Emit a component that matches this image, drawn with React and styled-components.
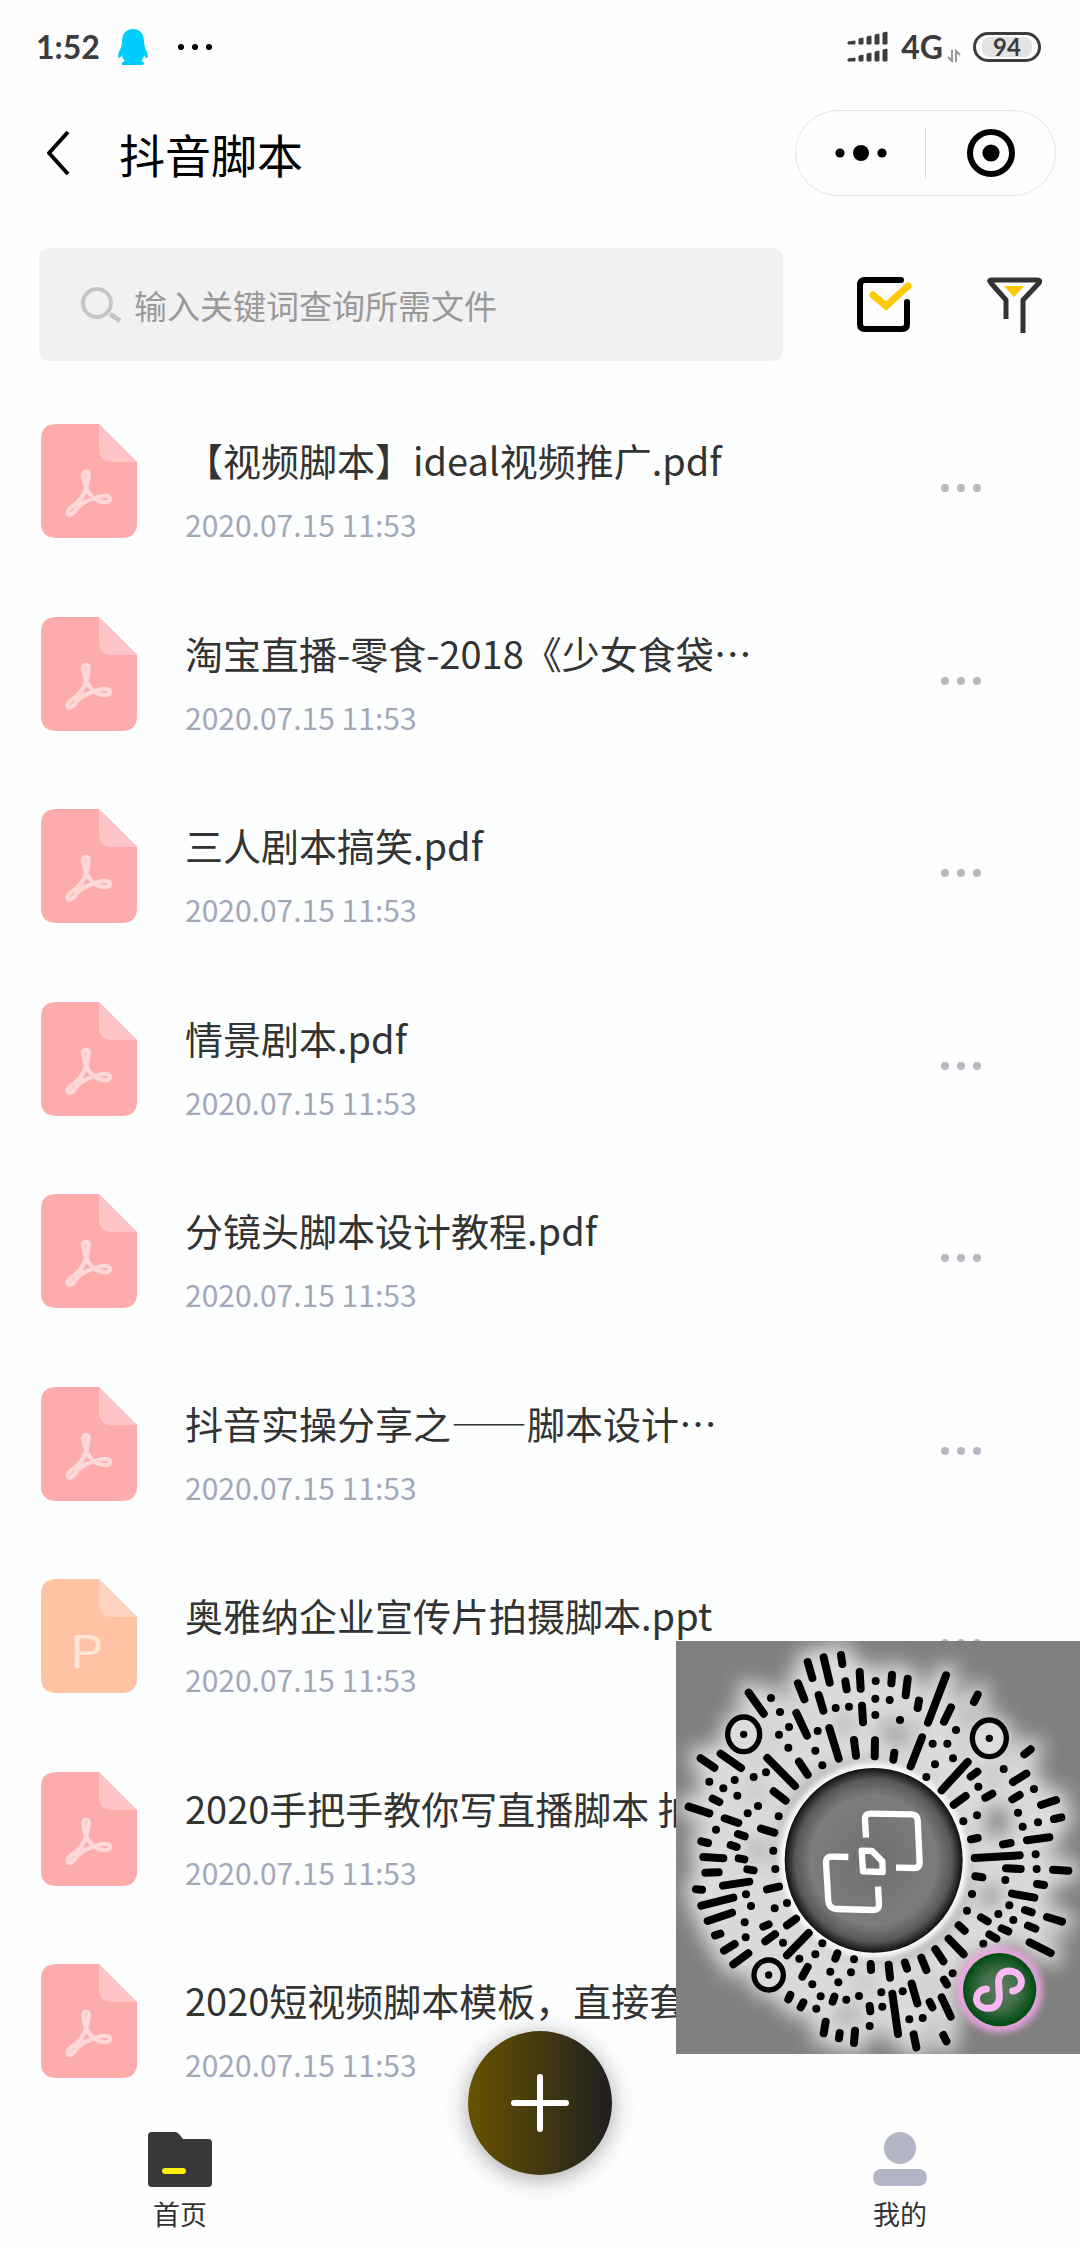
import React from 'react'
import { useState } from 'react'
import styled, { createGlobalStyle } from 'styled-components'

const files = [
  { id: 1, type: 'pdf', name: '【视频脚本】ideal视频推广.pdf' },
  { id: 2, type: 'pdf', name: '淘宝直播-零食-2018《少女食袋…' },
  { id: 3, type: 'pdf', name: '三人剧本搞笑.pdf' },
  { id: 4, type: 'pdf', name: '情景剧本.pdf' },
  { id: 5, type: 'pdf', name: '分镜头脚本设计教程.pdf' },
  { id: 6, type: 'pdf', name: '抖音实操分享之⸺脚本设计…' },
  { id: 7, type: 'ppt', name: '奥雅纳企业宣传片拍摄脚本.ppt' },
  { id: 8, type: 'pdf', name: '2020手把手教你写直播脚本 拍…' },
  { id: 9, type: 'pdf', name: '2020短视频脚本模板，直接套…' },
]

// strokes of the mini program code: x1, y1, x2, y2
const codeBars = [
  [443, 126, 457, 174], [491, 112, 509, 188], [543, 105, 547, 132], [414, 190, 433, 238],
  [476, 225, 490, 272], [556, 184, 560, 208], [599, 156, 602, 206], [696, 164, 694, 190],
  [743, 176, 737, 226], [777, 242, 773, 264], [858, 166, 804, 308], [873, 262, 852, 305],
  [953, 224, 942, 246], [266, 218, 311, 281], [409, 279, 441, 347], [606, 257, 609, 307],
  [508, 324, 536, 416], [582, 360, 588, 407], [645, 361, 644, 409], [703, 398, 700, 419],
  [786, 352, 752, 439], [417, 425, 443, 464], [322, 414, 405, 498], [341, 514, 377, 542],
  [923, 426, 845, 511], [952, 455, 932, 470], [1112, 388, 1093, 403], [1099, 461, 1059, 486],
  [997, 521, 976, 533], [917, 528, 881, 554], [1079, 525, 1057, 538], [1188, 540, 1143, 555],
  [1204, 592, 1182, 597], [1168, 652, 1101, 661], [953, 654, 933, 658], [1052, 669, 1029, 673],
  [1079, 706, 944, 714], [1038, 745, 1082, 747], [1179, 749, 1225, 752], [946, 769, 967, 772],
  [1131, 792, 1152, 795], [1056, 821, 1123, 833], [1095, 870, 1115, 877], [1161, 891, 1206, 905],
  [963, 892, 983, 904], [1104, 917, 1126, 926], [1025, 925, 1045, 934], [1109, 967, 1172, 999],
  [988, 943, 1009, 956], [896, 916, 914, 932], [866, 956, 911, 1003], [826, 988, 850, 1024],
  [784, 1013, 799, 1050], [735, 1028, 741, 1046], [686, 1034, 690, 1073], [632, 1032, 633, 1050],
  [532, 1000, 526, 1016], [443, 1041, 427, 1070], [852, 1079, 861, 1094], [523, 1130, 518, 1145],
  [391, 1125, 385, 1138], [430, 1147, 422, 1162], [629, 1158, 631, 1174], [755, 1091, 772, 1150],
  [697, 1121, 714, 1242], [809, 1146, 817, 1162], [845, 1132, 872, 1190], [497, 1205, 491, 1240],
  [539, 1239, 537, 1255], [585, 1232, 582, 1269], [761, 1243, 769, 1282], [850, 1245, 859, 1264],
  [122, 415, 163, 443], [182, 401, 243, 444], [158, 536, 178, 546], [86, 560, 148, 580],
  [194, 595, 235, 609], [234, 642, 254, 649], [303, 626, 343, 638], [124, 664, 144, 669],
  [212, 675, 230, 681], [130, 711, 190, 715], [236, 715, 253, 718], [262, 748, 281, 751],
  [136, 758, 176, 757], [189, 797, 268, 785], [108, 808, 126, 809], [124, 857, 220, 833],
  [143, 903, 216, 878], [321, 808, 357, 800], [381, 916, 408, 896], [310, 920, 326, 913],
  [316, 964, 345, 943], [165, 946, 181, 941], [192, 992, 224, 972], [220, 1033, 265, 1000],
  [381, 1006, 446, 939],
]

const codeDots = [
  [647, 183], [333, 234], [360, 276], [387, 321], [357, 344], [385, 383], [527, 264], [567, 260],
  [646, 236], [689, 240], [646, 285], [720, 300], [888, 330], [818, 371], [862, 371], [879, 415],
  [825, 433], [799, 471], [473, 333], [466, 392], [487, 436], [1031, 447], [955, 500], [1122, 507],
  [951, 586], [910, 604], [1074, 578], [1088, 620], [1134, 607], [1127, 703], [1130, 747], [1036, 780],
  [936, 822], [1048, 856], [1015, 882], [1060, 900], [921, 872], [970, 971], [487, 970], [466, 1003],
  [418, 1016], [582, 1018], [511, 1055], [573, 1057], [535, 1087], [457, 1093], [482, 1129], [559, 1139],
  [597, 1128], [469, 1166], [664, 1117], [728, 1114], [667, 1160], [629, 1218], [748, 1198], [788, 1194],
  [878, 1060], [148, 485], [190, 505], [224, 480], [281, 471], [318, 457], [232, 527], [294, 558],
  [263, 580], [356, 589], [168, 629], [340, 692], [346, 747], [258, 823], [273, 858], [344, 865],
  [381, 849], [254, 907], [257, 952], [369, 968],
]

const codeEyes = [
  { cx: 251, cy: 343, rx: 48, ry: 52 },
  { cx: 988, cy: 355, rx: 51, ry: 55 },
  { cx: 326, cy: 1065, rx: 44, ry: 45 },
]

const PenguinIcon = () => (
  <svg width="30" height="36" viewBox="0 0 30 36" fill="#00ccfe">
    <path d="M15 0C8 0 4 5 4 12C4 16 3 19 1 23C0 26 0 29 1 29C2 29 3 28 4 26C4 28 5 30 7 32C4 33 3 34 4 36H25C27 34 26 33 23 32C25 30 26 28 26 26C27 28 28 29 29 29C30 29 30 26 29 23C27 19 26 16 26 12C26 5 22 0 15 0Z" />
  </svg>
)

const SignalIcon = () => (
  <svg width="42" height="32" viewBox="0 0 42 32" fill="#3c3c3c" stroke="#3c3c3c" strokeLinejoin="round">
    {[0, 17].map(y => (
      <g key={y} transform={`translate(0 ${y})`}>
        <path d="M1 11L8 10V13H1Z" />
        <path d="M12 8L16 7V13H12Z" />
        <path d="M20 6L24 5V13H20Z" />
        <path d="M28 4L32 3V13H28Z" />
        <path d="M36 2L40 1V13H36Z" />
      </g>
    ))}
  </svg>
)

const DataArrows = () => (
  <svg width="14" height="14" viewBox="0 0 14 14" fill="none" stroke="#999" strokeWidth="2">
    <path d="M5 1V12L1 8M9 13V2L13 6" />
  </svg>
)

const BackIcon = () => (
  <svg width="24" height="46" viewBox="0 0 24 46" fill="none" stroke="#000" strokeWidth="4" strokeLinejoin="round">
    <path d="M22 2L3 23L22 44" />
  </svg>
)

const MenuIcon = () => (
  <svg width="52" height="18" viewBox="0 0 52 18">
    <circle cx="5" cy="9" r="4.6" />
    <circle cx="26" cy="9" r="8" />
    <circle cx="47" cy="9" r="4.6" />
  </svg>
)

const TargetIcon = () => (
  <svg width="50" height="50" viewBox="0 0 50 50">
    <circle cx="25" cy="25" r="21" fill="none" stroke="#000" strokeWidth="6" />
    <circle cx="25" cy="25" r="8.6" />
  </svg>
)

const SearchIcon = () => (
  <svg width="42" height="38" viewBox="0 0 42 38" fill="none" stroke="#c6c6c6" strokeWidth="4">
    <circle cx="17" cy="17" r="14" />
    <path d="M30 28L40 35" strokeWidth="5" />
  </svg>
)

const SelectIcon = () => (
  <svg width="56" height="56" viewBox="0 0 56 56" fill="none" strokeLinecap="round" strokeLinejoin="round">
    <path d="M44 3H8Q3 3 3 8V47Q3 52 8 52H45Q50 52 50 47V25" stroke="#000" strokeWidth="6" />
    <path d="M16 18L29 29L51 9" stroke="#ffcb00" strokeWidth="7" strokeLinejoin="miter" />
  </svg>
)

const FilterIcon = () => (
  <svg width="56" height="56" viewBox="0 0 56 56" fill="none" stroke="#333" strokeWidth="5" strokeLinejoin="round">
    <path d="M19 42V23L4 6Q1 3 5 3H50Q54 3 52 6L36 23V56" />
    <path d="M17 9H37L27 20Z" fill="#ffcb00" stroke="none" />
  </svg>
)

const FileIcon = ({ type }) => {
  const ppt = type === 'ppt'
  return (
    <svg width="97" height="115" viewBox="0 0 97 115">
      <path d="M16 0H58L96 38V99Q96 114 81 114H16Q0 114 0 99V15Q0 0 16 0Z" fill={ppt ? '#fec2a4' : '#fdabab'} />
      <path d="M58 0L96 38H71Q58 38 58 25Z" fill={ppt ? '#fed3bf' : '#fec4c8'} />
      {ppt ? (
        <text x="46" y="89" textAnchor="middle" fontFamily="Liberation Sans, sans-serif" fontSize="48" fill="#ffe9d6">P</text>
      ) : (
        <path
          d="M45 48C41 48 42 54 44 60C46 68 50 73 56 76C62 79 69 79 69 75C69 71 62 71 54 74C45 77 40 79 36 84C33 89 29 92 27 90C25 87 30 83 36 79C42 74 46 64 47 56C48 51 48 48 45 48Z"
          fill="none"
          stroke="#fed7d7"
          strokeWidth="4.4"
          strokeLinejoin="round"
        />
      )}
    </svg>
  )
}

const MoreIcon = () => (
  <svg width="42" height="10" viewBox="0 0 42 10" fill="#b7b8c1">
    <circle cx="5" cy="5" r="4" />
    <circle cx="21" cy="5" r="4" />
    <circle cx="37" cy="5" r="4" />
  </svg>
)

const FolderIcon = () => (
  <svg width="64" height="56" viewBox="0 0 64 56">
    <path d="M4 0H27Q29 0 31 2L35 7H60Q64 7 64 11V51Q64 55 60 55H4Q0 55 0 51V4Q0 0 4 0Z" fill="#383838" />
    <rect x="14" y="36" width="24" height="6" rx="3" fill="#fff100" />
  </svg>
)

const UserIcon = () => (
  <svg width="56" height="56" viewBox="0 0 56 56" fill="#b1b5c5">
    <circle cx="28" cy="16" r="16" />
    <rect x="1" y="37" width="54" height="17" rx="8" />
  </svg>
)

const PlusIcon = () => (
  <svg width="58" height="58" viewBox="0 0 58 58" stroke="#fff" strokeWidth="6" strokeLinecap="round">
    <path d="M29 3V55M3 29H55" />
  </svg>
)

const MiniCode = () => (
  <svg width="404" height="413" viewBox="48 63 1212 1239" role="img" aria-label="小程序码">
    <defs>
      <filter id="halo" x="-20%" y="-20%" width="140%" height="140%">
        <feGaussianBlur stdDeviation="28" />
      </filter>
      <filter id="soft" x="-30%" y="-30%" width="160%" height="160%">
        <feGaussianBlur stdDeviation="9" />
      </filter>
      <radialGradient id="disc">
        <stop offset="0" stopColor="#707070" />
        <stop offset="0.7" stopColor="#7c7c7c" />
        <stop offset="0.88" stopColor="#585858" />
        <stop offset="1" stopColor="#101010" />
      </radialGradient>
      <radialGradient id="green">
        <stop offset="0" stopColor="#5f7a63" />
        <stop offset="0.5" stopColor="#44704a" />
        <stop offset="1" stopColor="#004a12" />
      </radialGradient>
      <g id="marks" strokeLinecap="round">
        {codeBars.map(([x1, y1, x2, y2]) => (
          <line key={`${x1}-${y1}`} x1={x1} y1={y1} x2={x2} y2={y2} />
        ))}
        {codeDots.map(([x, y]) => (
          <line key={`${x}-${y}`} x1={x} y1={y} x2={x} y2={y} />
        ))}
      </g>
    </defs>
    <rect x="48" y="63" width="1212" height="1239" fill="#808080" />
    <g filter="url(#halo)" opacity="0.72">
      <use href="#marks" stroke="#fff" strokeWidth="72" />
      {codeEyes.map(eye => (
        <ellipse key={eye.cx} {...eye} fill="#fff" stroke="#fff" strokeWidth="44" />
      ))}
    </g>
    <ellipse cx="641" cy="721" rx="284" ry="294" fill="#fff" filter="url(#soft)" />
    <use href="#marks" stroke="#000" strokeWidth="24" />
    {codeEyes.map(eye => (
      <g key={eye.cx}>
        <ellipse {...eye} fill="#dcdcdc" stroke="#000" strokeWidth="16" />
        <circle cx={eye.cx} cy={eye.cy} r="11" />
      </g>
    ))}
    <ellipse cx="641" cy="721" rx="267" ry="277" fill="url(#disc)" />
    <g fill="none" stroke="#fff" strokeWidth="19" strokeLinejoin="round">
      <path d="M618 653L615 600Q613 581 632 581L755 583Q772 584 773 600L779 728Q779 744 763 744L708 743" />
      <path d="M565 711L515 710Q497 710 498 728L505 845Q508 866 530 867L640 870Q658 870 657 852L654 800" />
      <path d="M605 692L636 693L667 724L668 756L609 754Z" />
    </g>
    <circle cx="1019" cy="1109" r="130" fill="#f7a8ec" opacity="0.8" filter="url(#soft)" />
    <circle cx="1019" cy="1109" r="110" fill="url(#green)" />
    <path
      d="M979 1107C938 1112 940 1164 984 1165C1009 1165 1019 1150 1018 1125L1016 1092C1014 1067 1025 1053 1048 1053C1090 1055 1098 1106 1058 1113"
      fill="none"
      stroke="#fcb8f5"
      strokeWidth="21"
      strokeLinecap="round"
    />
  </svg>
)

const App = () => {
  const [keyword, setKeyword] = useState('')

  return (
    <Page lang="zh-CN">
      <GlobalStyle />
      <StatusBar>
        <StatusGroup $gap="18px">
          <Clock>1:52</Clock>
          <PenguinIcon />
          <StatusDots>
            <i />
            <i />
            <i />
          </StatusDots>
        </StatusGroup>
        <StatusGroup $gap="12px">
          <SignalIcon />
          <Network>
            4G
            <DataArrows />
          </Network>
          <Battery>
            <span>94</span>
          </Battery>
        </StatusGroup>
      </StatusBar>

      <NavBar>
        <IconButton aria-label="返回">
          <BackIcon />
        </IconButton>
        <Title>抖音脚本</Title>
        <Capsule>
          <CapsuleButton aria-label="更多">
            <MenuIcon />
          </CapsuleButton>
          <CapsuleButton aria-label="关闭">
            <TargetIcon />
          </CapsuleButton>
        </Capsule>
      </NavBar>

      <Toolbar>
        <SearchBox>
          <SearchIcon />
          <input
            type="text"
            aria-label="搜索"
            placeholder="输入关键词查询所需文件"
            value={keyword}
            onChange={e => setKeyword(e.target.value)}
          />
        </SearchBox>
        <IconButton aria-label="选择">
          <SelectIcon />
        </IconButton>
        <IconButton aria-label="筛选">
          <FilterIcon />
        </IconButton>
      </Toolbar>

      <FileList>
        {files.map(file => (
          <FileRow key={file.id}>
            <FileIcon type={file.type} />
            <FileInfo>
              <FileName>{file.name}</FileName>
              <FileDate>2020.07.15 11:53</FileDate>
            </FileInfo>
            <MoreButton aria-label="更多操作">
              <MoreIcon />
            </MoreButton>
          </FileRow>
        ))}
      </FileList>

      <TabBar>
        <Tab href="#home">
          <FolderIcon />
          首页
        </Tab>
        <AddButton aria-label="添加">
          <PlusIcon />
        </AddButton>
        <Tab href="#mine">
          <UserIcon />
          我的
        </Tab>
      </TabBar>

      <CodeOverlay>
        <MiniCode />
      </CodeOverlay>
    </Page>
  )
}

export default App

const GlobalStyle = createGlobalStyle`
  * {
    box-sizing: border-box;
  }

  body {
    margin: 0;
    background: #fefefe;
    font-family: "Noto Sans CJK SC", "Noto Sans", sans-serif;
  }

  button {
    padding: 0;
    border: 0;
    background: none;
    font: inherit;
    cursor: pointer;
  }

  svg {
    display: block;
    flex-shrink: 0;
  }
`

const Page = styled.div`
  position: relative;
  display: flex;
  flex-direction: column;
  min-height: 100vh;
  overflow: hidden;
`

const StatusBar = styled.div`
  display: flex;
  align-items: center;
  justify-content: space-between;
  height: 94px;
  padding: 0 39px 0 36px;
  color: #3c3c3c;
  font-family: Lato, sans-serif;
  font-weight: 700;
`

const StatusGroup = styled.div`
  display: flex;
  align-items: center;
  gap: ${({ $gap }) => $gap};
`

const Clock = styled.span`
  font-size: 32px;
  line-height: 40px;
`

const StatusDots = styled.span`
  display: flex;
  gap: 8px;
  padding-left: 12px;

  i {
    width: 6px;
    height: 6px;
    border-radius: 50%;
    background: #000;
  }
`

const Network = styled.span`
  display: flex;
  align-items: flex-end;
  gap: 4px;
  font-size: 32px;
  line-height: 32px;
`

const Battery = styled.span`
  display: flex;
  width: 68px;
  height: 30px;
  padding: 2px 6px;
  border: 3px solid #3c3c3c;
  border-radius: 15px;

  span {
    flex: 1;
    border-radius: 8px;
    background: #e3e3e3;
    font-size: 24px;
    line-height: 20px;
    text-align: center;
  }
`

const NavBar = styled.header`
  display: flex;
  align-items: center;
  height: 118px;
  padding: 0 24px 0 46px;
`

const Title = styled.h1`
  flex: 1;
  margin: 0;
  padding-left: 49px;
  color: #000;
  font-size: 46px;
  font-weight: 400;
  line-height: 64px;
`

const IconButton = styled.button`
  display: flex;
`

const Capsule = styled.div`
  display: flex;
  align-items: center;
  width: 261px;
  height: 86px;
  border: 1px solid #e6e6e6;
  border-radius: 43px;
`

const CapsuleButton = styled.button`
  display: flex;
  flex: 1;
  align-items: center;
  justify-content: center;
  height: 50px;

  & + & {
    border-left: 1px solid #dcdcdc;
  }
`

const Toolbar = styled.div`
  display: flex;
  align-items: center;
  gap: 74px;
  padding: 36px 37px 39px 39px;
`

const SearchBox = styled.label`
  display: flex;
  flex: 1;
  align-items: center;
  gap: 12px;
  height: 113px;
  padding: 0 41px;
  border-radius: 10px;
  background: #f1f1f1;

  input {
    flex: 1;
    min-width: 0;
    padding: 0;
    border: 0;
    outline: 0;
    background: none;
    color: #333;
    font: inherit;
    font-size: 33px;
    line-height: 48px;
  }

  input::placeholder {
    color: #999;
    opacity: 1;
  }
`

const FileList = styled.ul`
  display: flex;
  flex: 1;
  flex-direction: column;
  justify-content: space-between;
  gap: 24px;
  margin: 0;
  padding: 24px 98px 28px 41px;
  background: #fcfffe;
  list-style: none;
`

const FileRow = styled.li`
  display: flex;
  align-items: flex-start;
`

const FileInfo = styled.div`
  flex: 1;
  min-width: 0;
  padding: 8px 0 0 47px;
`

const FileName = styled.div`
  overflow: hidden;
  color: #333;
  font-size: 38px;
  line-height: 56px;
  white-space: nowrap;
`

const FileDate = styled.div`
  margin-top: 16px;
  color: #a4a7b8;
  font-size: 30px;
  line-height: 40px;
`

const MoreButton = styled.button`
  display: flex;
  align-items: center;
  height: 48px;
  margin-top: 40px;
`

const TabBar = styled.nav`
  position: relative;
  display: grid;
  grid-template-columns: repeat(3, 1fr);
  justify-items: center;
  height: 136px;
  background: #fefefe;
`

const Tab = styled.a`
  display: flex;
  flex-direction: column;
  align-items: center;
  gap: 6px;
  padding-top: 20px;
  color: #333;
  font-size: 27px;
  line-height: 40px;
  text-decoration: none;
`

const AddButton = styled.button`
  display: flex;
  align-items: center;
  justify-content: center;
  width: 144px;
  height: 144px;
  margin-top: -81px;
  border-radius: 50%;
  background: linear-gradient(90deg, #675300, #1f1f1f);
  box-shadow: 0 4px 24px rgba(0, 0, 0, 0.35);
`

const CodeOverlay = styled.div`
  position: absolute;
  right: 0;
  bottom: 194px;
`
